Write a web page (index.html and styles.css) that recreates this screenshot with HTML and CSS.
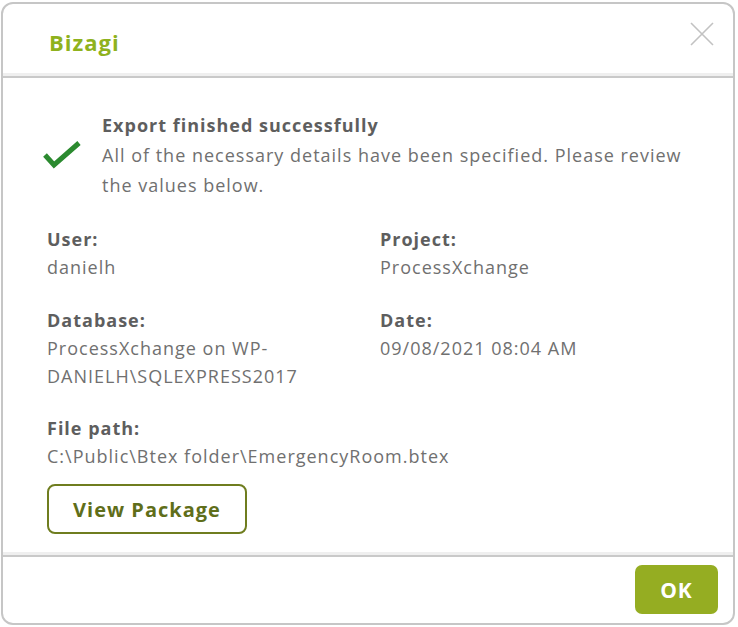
FILE: index.html
```html
<!DOCTYPE html>
<html lang="en">
<head>
  <meta charset="UTF-8">
  <title>Bizagi</title>
  <link rel="stylesheet" href="styles.css">
</head>
<body>
  <div class="dialog">
    <div class="dialog-header">
      <h1 class="dialog-title">Bizagi</h1>
      <svg class="close-icon" width="24" height="24" viewBox="0 0 24 24">
        <path d="M1 1 L23 23 M23 1 L1 23" stroke="#c2c2c2" stroke-width="1.6" fill="none"/>
      </svg>
    </div>
    <div class="dialog-body">
      <div class="status">
        <svg class="check-icon" width="40" height="28" viewBox="0 0 40 28">
          <path d="M2 14 L11 24 L36 2" stroke="#2b8a2f" stroke-width="5" fill="none"/>
        </svg>
        <div class="status-text">
          <div class="status-title">Export finished successfully</div>
          <div>All of the necessary details have been specified. Please review the values below.</div>
        </div>
      </div>
      <div class="details">
        <div class="field">
          <div class="label">User:</div>
          <div class="value">danielh</div>
        </div>
        <div class="field">
          <div class="label">Project:</div>
          <div class="value">ProcessXchange</div>
        </div>
        <div class="field">
          <div class="label">Database:</div>
          <div class="value">ProcessXchange on WP-<br>DANIELH\SQLEXPRESS2017</div>
        </div>
        <div class="field">
          <div class="label">Date:</div>
          <div class="value">09/08/2021 08:04 AM</div>
        </div>
        <div class="field wide">
          <div class="label">File path:</div>
          <div class="value">C:\Public\Btex folder\EmergencyRoom.btex</div>
        </div>
      </div>
      <button class="outline-button">View Package</button>
    </div>
    <div class="dialog-footer">
      <button class="ok-button">OK</button>
    </div>
  </div>
</body>
</html>
```

FILE: styles.css
```css
body {
  margin: 0;
  background: #ffffff;
  font-family: 'Open Sans', 'Liberation Sans', sans-serif;
}

.dialog {
  margin: 2px 1px 0 1px;
  width: 734px;
  height: 623px;
  box-sizing: border-box;
  border: 2px solid #c6c6c6;
  border-radius: 12px;
  background: #ffffff;
  display: flex;
  flex-direction: column;
  overflow: hidden;
}

/* header */
.dialog-header {
  height: 74px;
  flex-shrink: 0;
  display: flex;
  align-items: center;
  justify-content: space-between;
  padding: 4px 19px 0 46px;
  box-sizing: border-box;
  border-bottom: 2px solid #c9c9c9;
  box-shadow: inset 0 -3px 0 #efefef;
}

.dialog-title {
  margin: 0;
  font-size: 22px;
  font-weight: 700;
  color: #8fb21d;
  letter-spacing: 1px;
}

.close-icon {
  align-self: flex-start;
  margin-top: 14px;
}

/* body */
.dialog-body {
  flex: 1;
  padding: 32px 20px 0 42px;
  color: #707070;
  font-size: 18px;
  letter-spacing: 1px;
  line-height: 30px;
}

.status {
  display: flex;
  align-items: center;
  gap: 19px;
}

.check-icon {
  margin-left: -2px;
  flex-shrink: 0;
}

.status-text {
  width: 590px;
}

.status-title {
  font-weight: 700;
  color: #5e5e5e;
}

.details {
  margin-top: 25px;
  display: grid;
  grid-template-columns: 333px 1fr;
  row-gap: 25px;
  line-height: 28px;
  padding-left: 2px;
}

.field.wide {
  grid-column: 1 / 3;
  margin-top: -1px;
}

.label {
  font-weight: 700;
  color: #5e5e5e;
}

.outline-button {
  margin: 14px 0 0 2px;
  width: 200px;
  height: 50px;
  background: #ffffff;
  border: 2px solid #6f7d1f;
  border-radius: 8px;
  font-family: 'Open Sans', 'Liberation Sans', sans-serif;
  font-size: 20px;
  font-weight: 700;
  letter-spacing: 1px;
  color: #5f6e1a;
  cursor: pointer;
}

/* footer */
.dialog-footer {
  height: 68px;
  flex-shrink: 0;
  box-sizing: border-box;
  border-top: 2px solid #c9c9c9;
  box-shadow: 0 -3px 0 #efefef;
  display: flex;
  justify-content: flex-end;
  align-items: flex-start;
  padding: 8px 15px 0 0;
}

.ok-button {
  width: 83px;
  height: 49px;
  border: none;
  border-radius: 7px;
  background: #95ad22;
  color: #ffffff;
  font-family: 'Open Sans', 'Liberation Sans', sans-serif;
  font-size: 21px;
  font-weight: 700;
  letter-spacing: 1px;
  cursor: pointer;
}
```
